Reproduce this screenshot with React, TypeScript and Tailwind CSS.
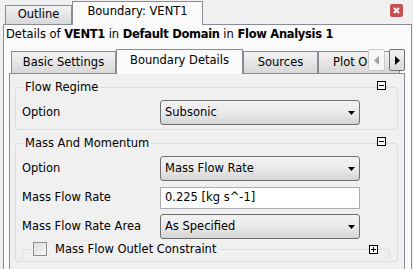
import React from "react"

const font = "font-['DejaVu_Sans',sans-serif]"

function CollapseIcon({ plus }: { plus?: boolean }) {
  return (
    <svg width="9" height="9" viewBox="0 0 9 9" className="block">
      <rect x="0.5" y="0.5" width="8" height="8" fill="#ffffff" stroke="#000000" />
      <line x1="2" y1="4.5" x2="7" y2="4.5" stroke="#000000" />
      {plus && <line x1="4.5" y1="2" x2="4.5" y2="7" stroke="#000000" />}
    </svg>
  )
}

function Dropdown({ value }: { value: string }) {
  return (
    <div className="w-[200px] h-[25px] border border-[#707070] rounded-[3px] bg-linear-to-b from-[#f2f2f2] via-[#ebebeb] to-[#d4d4d4] flex items-center justify-between pl-[4px] pr-[4px]">
      <span>{value}</span>
      <svg width="7" height="4" viewBox="0 0 7 4" className="block">
        <polygon points="0,0 7,0 3.5,4" fill="#000000" />
      </svg>
    </div>
  )
}

function Row({ label, children }: { label: string; children: React.ReactNode }) {
  return (
    <div className="flex items-center h-[29px]">
      <div className="w-[138px]">{label}</div>
      {children}
    </div>
  )
}

function GroupBox({ title, children, className }: { title: string; children: React.ReactNode; className?: string }) {
  return (
    <fieldset className={"relative border border-[#d5dfe5] rounded-[3px] pl-[6px] pr-[7px] pt-[4px] pb-[2px] " + (className ?? "")}>
      <legend className="ml-[1px] px-[2px] leading-[14px]">{title}</legend>
      <div className="absolute right-[11px] -top-[13px]">
        <CollapseIcon />
      </div>
      {children}
    </fieldset>
  )
}

export default function App() {
  return (
    <div className={`w-[413px] h-[269px] bg-[#f0f0f0] overflow-hidden text-[11.5px] text-black ${font}`}>
      {/* outer tab strip */}
      <div className="flex items-end h-[24px] pl-[5px]">
        <div className="w-[67px] h-[19px] border border-b-0 border-[#898c95] bg-linear-to-b from-[#f3f3f3] to-[#d8d8d8] flex items-center justify-center">
          Outline
        </div>
        <div className="relative z-10 w-[131px] h-[24px] -mb-px border border-b-0 border-[#898c95] bg-[#fafafa] flex items-center justify-center pb-[3px]">
          Boundary: VENT1
        </div>
        <div className="ml-auto mr-[10px] self-start mt-[4px]">
          <svg width="13" height="13" viewBox="0 0 13 13" className="block">
            <rect x="0" y="0" width="13" height="13" rx="2" fill="#c75050" />
            <path d="M4 4 L9 9 M9 4 L4 9" stroke="#ffffff" strokeWidth="2" />
          </svg>
        </div>
      </div>

      {/* outer panel */}
      <div className="ml-[3px] w-[409px] h-[260px] border border-[#898c95] bg-[#fafafa] pl-[5px] pr-[6px]">
        <div className="-ml-[3px] h-[16px] mt-[1px] leading-[16px] whitespace-nowrap">
          Details of <b className="tracking-[-0.3px]">VENT1</b> in <b className="tracking-[-0.3px]">Default Domain</b> in{" "}
          <b className="tracking-[-0.3px]">Flow Analysis 1</b>
        </div>

        {/* inner tab strip */}
        <div className="relative flex items-end h-[31px] pl-[2px]">
          <div className="w-[105px] h-[22px] border border-b-0 border-[#898c95] bg-linear-to-b from-[#f3f3f3] to-[#d8d8d8] flex items-center justify-center">
            Basic Settings
          </div>
          <div className="relative z-10 w-[127px] h-[25px] -mb-px border border-b-0 border-[#898c95] bg-[#fafafa] flex items-center justify-center pb-[3px]">
            Boundary Details
          </div>
          <div className="w-[75px] h-[22px] border border-b-0 border-[#898c95] bg-linear-to-b from-[#f3f3f3] to-[#d8d8d8] flex items-center justify-center">
            Sources
          </div>
          <div className="w-[82px] h-[22px] border border-b-0 border-[#898c95] bg-linear-to-b from-[#f3f3f3] to-[#d8d8d8] flex items-center pl-[14px] overflow-hidden whitespace-nowrap">
            Plot O
          </div>
          <div className="absolute right-0 bottom-[2px] flex gap-[4px]">
            <div className="w-[17px] h-[22px] border border-[#c9c9c9] rounded-[2px] bg-[#f7f7f7] flex items-center justify-center">
              <svg width="5" height="9" viewBox="0 0 5 9" className="block">
                <polygon points="5,0 5,9 0,4.5" fill="#a0a0a0" />
              </svg>
            </div>
            <div className="w-[16px] h-[22px] border border-[#707070] rounded-[2px] bg-linear-to-b from-[#f2f2f2] to-[#dadada] flex items-center justify-center">
              <svg width="5" height="9" viewBox="0 0 5 9" className="block">
                <polygon points="0,0 0,9 5,4.5" fill="#000000" />
              </svg>
            </div>
          </div>
        </div>

        {/* inner panel */}
        <div className="h-[200px] border border-[#898c95] bg-[#f0f0f0] pl-[5px] pr-[6px] pt-[6px]">
          <GroupBox title="Flow Regime">
            <Row label="Option">
              <Dropdown value="Subsonic" />
            </Row>
          </GroupBox>

          <GroupBox title="Mass And Momentum" className="mt-[6px]">
            <Row label="Option">
              <Dropdown value="Mass Flow Rate" />
            </Row>
            <Row label="Mass Flow Rate">
              <div className="w-[200px] h-[22px] border border-[#abadb3] bg-white flex items-center pl-[4px]">
                0.225 [kg s^-1]
              </div>
            </Row>
            <Row label="Mass Flow Rate Area">
              <Dropdown value="As Specified" />
            </Row>
            <fieldset className="relative h-[18px] border border-b-0 border-[#d5dfe5] rounded-t-[4px] pl-[8px]">
              <legend className="px-[2px] leading-[16px] flex items-center gap-[8px] whitespace-nowrap">
                <span className="w-[14px] h-[14px] border border-[#8e8f8f] bg-linear-to-br from-[#dcdcdc] to-[#f8f8f8] block" />
                Mass Flow Outlet Constraint
              </legend>
              <div className="absolute right-[11px] -top-[12px]">
                <CollapseIcon plus />
              </div>
            </fieldset>
          </GroupBox>
        </div>
      </div>
    </div>
  )
}
